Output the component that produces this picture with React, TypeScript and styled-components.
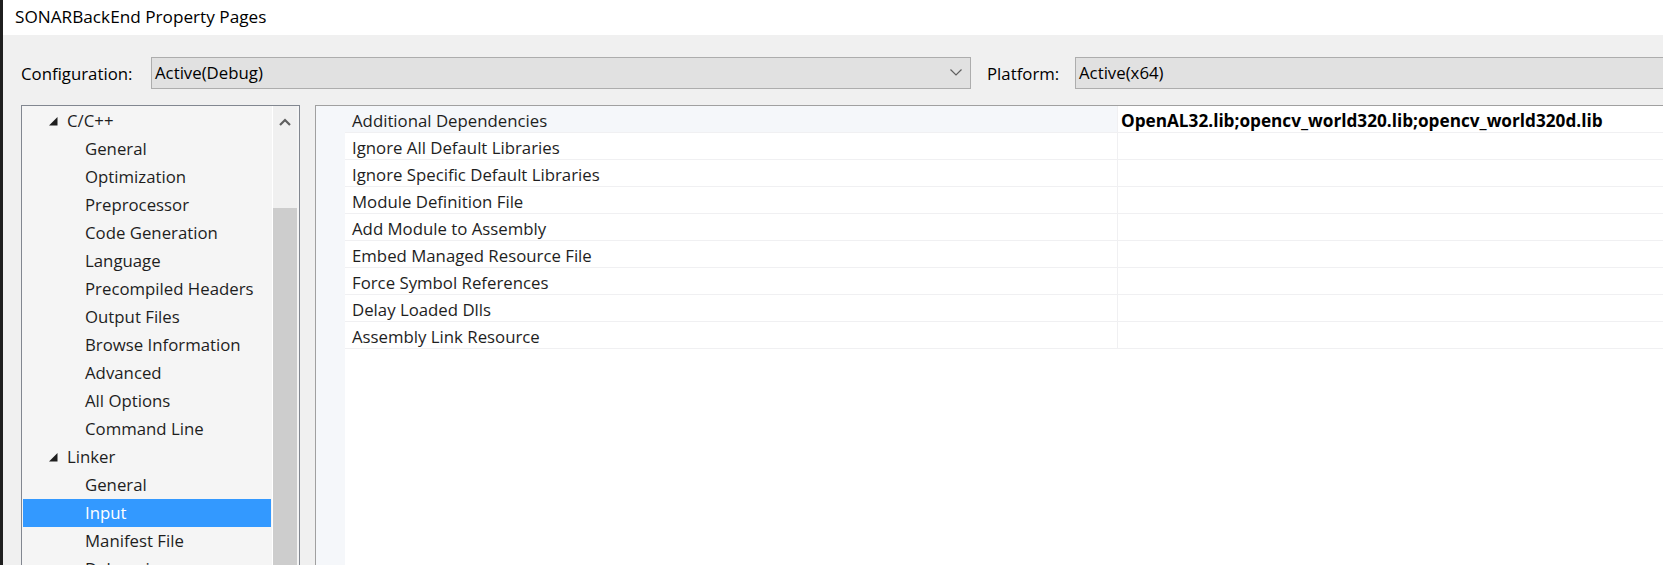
import React from "react";
import styled, { createGlobalStyle } from "styled-components";

const GlobalStyle = createGlobalStyle`
  html, body {
    margin: 0;
    padding: 0;
    height: 100%;
    overflow: hidden;
    background: #f0f0f0;
  }
  body {
    font-family: "Open Sans", "Noto Sans", sans-serif;
    font-size: 16.8px;
    color: #000;
  }
  #root {
    height: 100%;
  }
`;

const treeItems: TreeItem[] = [
    { label: "C/C++", level: 0 },
    { label: "General", level: 1 },
    { label: "Optimization", level: 1 },
    { label: "Preprocessor", level: 1 },
    { label: "Code Generation", level: 1 },
    { label: "Language", level: 1 },
    { label: "Precompiled Headers", level: 1 },
    { label: "Output Files", level: 1 },
    { label: "Browse Information", level: 1 },
    { label: "Advanced", level: 1 },
    { label: "All Options", level: 1 },
    { label: "Command Line", level: 1 },
    { label: "Linker", level: 0 },
    { label: "General", level: 1 },
    { label: "Input", level: 1, selected: true },
    { label: "Manifest File", level: 1 },
    { label: "Debugging", level: 1 },
];

const properties = [
    { name: "Additional Dependencies", value: "OpenAL32.lib;opencv_world320.lib;opencv_world320d.lib" },
    { name: "Ignore All Default Libraries", value: "" },
    { name: "Ignore Specific Default Libraries", value: "" },
    { name: "Module Definition File", value: "" },
    { name: "Add Module to Assembly", value: "" },
    { name: "Embed Managed Resource File", value: "" },
    { name: "Force Symbol References", value: "" },
    { name: "Delay Loaded Dlls", value: "" },
    { name: "Assembly Link Resource", value: "" },
];

interface TreeItem {
    label: string
    level: number
    selected?: boolean
}

const App: React.FC = () => {
    return (
        <>
            <GlobalStyle />
            <Window>
                <Frame />
                <Dialog>
                    <TitleBar>SONARBackEnd Property Pages</TitleBar>
                    <ConfigRow>
                        <Label $width={130}>Configuration:</Label>
                        <Combo $width={820}>
                            Active(Debug)
                            <Chevron width="12" height="7" viewBox="0 0 12 7">
                                <polyline points="0.5,0.5 6,6 11.5,0.5" fill="none" stroke="#606060" strokeWidth="1.2" />
                            </Chevron>
                        </Combo>
                        <Label $width={88} $gap={16}>Platform:</Label>
                        <Combo $width={640}>Active(x64)</Combo>
                    </ConfigRow>
                    <Main>
                        <TreePanel>
                            <TreeList>
                                {treeItems.map((item, i) => (
                                    <TreeRow key={i} $level={item.level} $selected={item.selected}>
                                        {item.level === 0 && (
                                            <Expander width="9" height="9" viewBox="0 0 9 9">
                                                <polygon points="8.5,0 8.5,8.5 0,8.5" fill="#1e1e1e" />
                                            </Expander>
                                        )}
                                        {item.label}
                                    </TreeRow>
                                ))}
                            </TreeList>
                            <ScrollBar>
                                <ScrollArrow width="12" height="8" viewBox="0 0 12 8">
                                    <polyline points="1,7 6,2 11,7" fill="none" stroke="#606060" strokeWidth="2.2" />
                                </ScrollArrow>
                                <Thumb />
                            </ScrollBar>
                        </TreePanel>
                        <GridPanel>
                            <Gutter />
                            <Grid>
                                {properties.map((p, i) => (
                                    <PropRow key={i}>
                                        <NameCell $active={i === 0}>{p.name}</NameCell>
                                        <ValueCell>{p.value}</ValueCell>
                                    </PropRow>
                                ))}
                            </Grid>
                        </GridPanel>
                    </Main>
                </Dialog>
            </Window>
        </>
    )
}

const Window = styled.div`
    display: flex;
    height: 565px;
    overflow: hidden;
`

const Frame = styled.div`
    flex: none;
    width: 3px;
    background: #1f1f1f;
`

const Dialog = styled.div`
    flex: 1;
    min-width: 0;
    display: flex;
    flex-direction: column;
    overflow: hidden;
`

const TitleBar = styled.div`
    flex: none;
    height: 35px;
    background: #fff;
    padding-left: 12px;
    display: flex;
    align-items: center;
    padding-bottom: 2px;
    box-sizing: border-box;
    font-size: 17.2px;
`

const ConfigRow = styled.div`
    flex: none;
    display: flex;
    align-items: center;
    height: 32px;
    margin-top: 22px;
    padding-left: 18px;
    white-space: nowrap;
`

const Label = styled.span<{ $width: number; $gap?: number }>`
    flex: none;
    width: ${(p) => p.$width}px;
    margin-left: ${(p) => p.$gap || 0}px;
`

const Combo = styled.div<{ $width: number }>`
    flex: none;
    position: relative;
    width: ${(p) => p.$width}px;
    height: 32px;
    box-sizing: border-box;
    border: 1px solid #adadad;
    background: #e1e1e1;
    display: flex;
    align-items: center;
    padding-left: 3px;
    padding-bottom: 1px;
`

const Chevron = styled.svg`
    position: absolute;
    right: 8px;
    top: 11px;
`

const Main = styled.div`
    flex: 1;
    display: flex;
    gap: 15px;
    margin-top: 16px;
    padding-left: 18px;
    min-height: 0;
`

const TreePanel = styled.div`
    flex: none;
    width: 279px;
    height: 600px;
    box-sizing: border-box;
    border: 1px solid #828790;
    background: #f5f5f5;
    display: flex;
`

const TreeList = styled.div`
    flex: 1;
    padding-top: 1px;
`

const TreeRow = styled.div<{ $level: number; $selected?: boolean }>`
    display: flex;
    align-items: center;
    height: 28px;
    margin: 0 1px;
    padding-left: ${(p) => (p.$level === 0 ? 26 : 62)}px;
    padding-bottom: 1px;
    box-sizing: border-box;
    white-space: nowrap;
    background: ${(p) => (p.$selected ? "#3399ff" : "transparent")};
    color: ${(p) => (p.$selected ? "#fff" : "#1e1e1e")};
`

const Expander = styled.svg`
    flex: none;
    margin-right: 9px;
    margin-top: 1px;
`

const ScrollBar = styled.div`
    flex: none;
    width: 24px;
    margin-right: 2px;
    background: #f0f0f0;
    border-left: 1px solid #fff;
    display: flex;
    flex-direction: column;
    align-items: center;
`

const ScrollArrow = styled.svg`
    margin-top: 12px;
`

const Thumb = styled.div`
    margin-top: 82px;
    align-self: stretch;
    height: 400px;
    background: #cdcdcd;
`

const GridPanel = styled.div`
    flex: 1;
    display: flex;
    border-top: 1px solid #a0a0a0;
    border-left: 1px solid #a0a0a0;
    background: #fff;
    min-width: 0;
`

const Gutter = styled.div`
    flex: none;
    width: 29px;
    background: #f5f7fa;
`

const Grid = styled.div`
    flex: 1;
    display: flex;
    flex-direction: column;
`

const PropRow = styled.div`
    display: grid;
    grid-template-columns: 772px 1fr;
    height: 27px;
    box-sizing: border-box;
    border-bottom: 1px solid #f0f0f2;
`

const NameCell = styled.div<{ $active?: boolean }>`
    display: flex;
    align-items: center;
    padding-left: 7px;
    padding-top: 3px;
    white-space: nowrap;
    background: ${(p) => (p.$active ? "#f5f7fa" : "#fff")};
    color: #1e1e1e;
`

const ValueCell = styled.div`
    display: flex;
    align-items: center;
    padding-left: 3px;
    padding-top: 3px;
    border-left: 1px solid #f0f0f2;
    font-weight: 700;
    font-size: 17.2px;
    white-space: nowrap;
`

export default App;
